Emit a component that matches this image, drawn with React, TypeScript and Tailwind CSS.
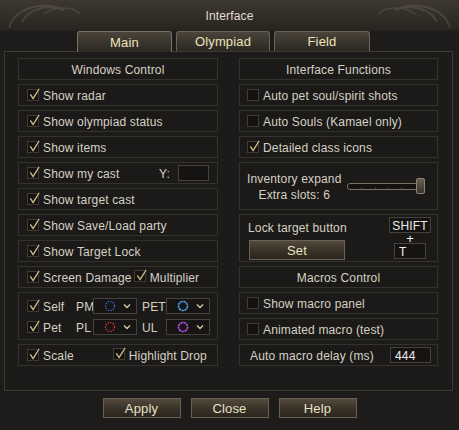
import React from 'react';

const Check: React.FC<{ checked?: boolean }> = ({ checked }) => (
    <span className="relative inline-block w-[12px] h-[12px] border border-[#3f3b35] bg-[#131211] shrink-0">
        {checked && (
            <svg viewBox="0 0 14 14" className="absolute left-[0px] top-[-3px] w-[13px] h-[14px]">
                <path d="M2.5 7.5 L5.5 12 L12 1.5" fill="none" stroke="#1e1a12" strokeWidth="3" />
                <path d="M2.5 7.5 L5.5 12 L12 1.5" fill="none" stroke="#cdbb8a" strokeWidth="1.4" />
            </svg>
        )}
    </span>
);

const Box: React.FC<{ className?: string; children?: React.ReactNode }> = ({ className = '', children }) => (
    <div className={`border border-[#34322e] bg-[#1b1a18] ${className}`}>{children}</div>
);

const Row: React.FC<{ label: string; checked?: boolean; left?: string; children?: React.ReactNode }> = ({
    label,
    checked,
    left = 'pl-[8px]',
    children,
}) => (
    <Box className={`h-[22px] flex items-center gap-[4px] ${left}`}>
        <Check checked={checked} />
        <span className="pt-[2px]">{label}</span>
        {children}
    </Box>
);

const Header: React.FC<{ label: string }> = ({ label }) => (
    <Box className="h-[22px] flex items-center justify-center pt-[1px]">{label}</Box>
);

const Ring: React.FC<{ color: string; dotted?: boolean }> = ({ color, dotted }) => (
    <svg viewBox="0 0 12 12" className="w-[12px] h-[12px]">
        <circle
            cx="6"
            cy="6"
            r="4.5"
            fill="none"
            stroke={color}
            strokeWidth={dotted ? 1.2 : 1.6}
            strokeDasharray={dotted ? '1.4 1.2' : '2.4 0.6'}
        />
    </svg>
);

const Chevron = () => (
    <svg viewBox="0 0 8 6" className="w-[8px] h-[6px]">
        <path d="M1 1.5 L4 4.5 L7 1.5" fill="none" stroke="#d6caa6" strokeWidth="1.4" />
    </svg>
);

const Drop: React.FC<{ color: string; dotted?: boolean }> = ({ color, dotted }) => (
    <div className="w-[44px] h-[16px] border border-[#45423d] bg-[#161513] flex items-center pl-[10px] pr-[5px] justify-between">
        <Ring color={color} dotted={dotted} />
        <Chevron />
    </div>
);

const Btn: React.FC<{ label: string; className?: string }> = ({ label, className = '' }) => (
    <div
        className={`h-[20px] flex items-center justify-center border border-[#6a6354] bg-gradient-to-b from-[#544b3c] via-[#3a3329] to-[#2a251e] text-[#eae2c4] ${className}`}
    >
        {label}
    </div>
);

export default function App() {
    return (
        <div
            className="w-[459px] h-[430px] bg-[#1d1c1a] text-[#d6d1c4] text-[12px] leading-none tracking-[0.15px] relative overflow-hidden"
            style={{ fontFamily: '"Liberation Sans", Arial, sans-serif' }}
        >
            {/* title bar */}
            <div className="h-[31px] bg-gradient-to-b from-[#3d3831] to-[#27241f] flex items-center justify-center relative">
                <span className="text-[#e2ddd2] pt-[1px]">Interface</span>
                <svg viewBox="0 0 80 30" className="absolute left-[4px] top-0 w-[80px] h-[30px] opacity-25">
                    <path d="M5 28 C10 8, 40 0, 60 10 C45 4, 25 8, 18 22" fill="none" stroke="#8a8070" strokeWidth="2" />
                    <path d="M40 14 C50 6, 70 6, 76 14" fill="none" stroke="#8a8070" strokeWidth="1.5" />
                </svg>
                <svg viewBox="0 0 80 30" className="absolute right-[4px] top-0 w-[80px] h-[30px] opacity-25 -scale-x-100">
                    <path d="M5 28 C10 8, 40 0, 60 10 C45 4, 25 8, 18 22" fill="none" stroke="#8a8070" strokeWidth="2" />
                    <path d="M40 14 C50 6, 70 6, 76 14" fill="none" stroke="#8a8070" strokeWidth="1.5" />
                </svg>
            </div>

            {/* tabs */}
            <div className="flex gap-[4px] pl-[77px] h-[20px]">
                <div className="w-[95px] h-[21px] rounded-t-[3px] border border-b-0 border-[#7a7262] bg-gradient-to-b from-[#4a443a] to-[#2c2822] flex items-center justify-center text-[#ece3bd] text-[13px]">
                    Main
                </div>
                <div className="w-[94px] h-[20px] rounded-t-[3px] border border-b-0 border-[#6a6356] bg-gradient-to-b from-[#4a443a] to-[#2c2822] flex items-center justify-center text-[#ece3bd] text-[13px]">
                    Olympiad
                </div>
                <div className="w-[96px] h-[20px] rounded-t-[3px] border border-b-0 border-[#6a6356] bg-gradient-to-b from-[#4a443a] to-[#2c2822] flex items-center justify-center text-[#ece3bd] text-[13px]">
                    Field
                </div>
            </div>

            {/* panel */}
            <div className="mx-[4px] mr-[6px] h-[340px] border border-[#3c3a36] bg-[#1c1b19] flex gap-[21px] pl-[13px] pr-[13px] pt-[6px]">
                <div className="w-[200px] flex flex-col gap-[4px]">
                    <Header label="Windows Control" />
                    <Row label="Show radar" checked />
                    <Row label="Show olympiad status" checked />
                    <Row label="Show items" checked />
                    <Row label="Show my cast" checked>
                        <span className="ml-auto mr-[4px] pt-[2px]">Y:</span>
                        <div className="w-[31px] h-[16px] border border-[#45423d] bg-[#151412] mr-[8px]" />
                    </Row>
                    <Row label="Show target cast" checked />
                    <Row label="Show Save/Load party" checked />
                    <Row label="Show Target Lock" checked />
                    <Row label="Screen Damage" checked>
                        <span className="ml-[-2px]">
                            <Check checked />
                        </span>
                        <span className="pt-[2px]">Multiplier</span>
                    </Row>
                    <Box className="h-[48px] flex flex-col justify-center gap-[5px] pl-[8px]">
                        <div className="flex items-center h-[16px]">
                            <Check checked />
                            <span className="ml-[4px] w-[33px] pt-[2px]">Self</span>
                            <span className="w-[17px] pt-[2px]">PM</span>
                            <Drop color="#3a6cf0" dotted />
                            <span className="ml-[5px] w-[24px] pt-[2px]">PET</span>
                            <Drop color="#4aa2f0" />
                        </div>
                        <div className="flex items-center h-[16px]">
                            <Check checked />
                            <span className="ml-[4px] w-[33px] pt-[2px]">Pet</span>
                            <span className="w-[17px] pt-[2px]">PL</span>
                            <Drop color="#e23a3a" dotted />
                            <span className="ml-[5px] w-[24px] pt-[2px]">UL</span>
                            <Drop color="#b44cf0" />
                        </div>
                    </Box>
                    <Row label="Scale" checked>
                        <span className="ml-[35px]">
                            <Check checked />
                        </span>
                        <span className="pt-[2px]">Highlight Drop</span>
                    </Row>
                </div>

                <div className="w-[199px] flex flex-col gap-[4px]">
                    <Header label="Interface Functions" />
                    <Row label="Auto pet soul/spirit shots" left="pl-[7px]" />
                    <Row label="Auto Souls (Kamael only)" left="pl-[7px]" />
                    <Row label="Detailed class icons" checked left="pl-[7px]" />
                    <Box className="h-[48px] flex items-center pl-[7px]">
                        <div className="flex flex-col items-center gap-[2px] leading-[14px] pt-[2px]">
                            <span>Inventory expand</span>
                            <span>Extra slots: 6</span>
                        </div>
                        <div className="relative ml-[6px] w-[78px] h-[16px] flex items-center">
                            <div className="w-full h-[7px] rounded-[3px] border border-[#7a7363] bg-[#141311]" />
                            {[14, 28, 41, 54].map((x) => (
                                <div key={x} className="absolute top-[10px] w-[1px] h-[2px] bg-[#6a6456]" style={{ left: x }} />
                            ))}
                            <div className="absolute right-0 top-0 w-[9px] h-[16px] rounded-[2px] border border-[#8a8372] bg-gradient-to-b from-[#6a6252] to-[#3a352c]" />
                        </div>
                    </Box>
                    <Box className="h-[48px] flex pl-[7px] pr-[6px]">
                        <div className="flex flex-col pt-[7px]">
                            <span className="pl-[1px]">Lock target button</span>
                            <Btn label="Set" className="mt-[6px] ml-[2px] w-[96px] text-[13px]" />
                        </div>
                        <div className="ml-auto flex flex-col items-center pt-[2px] w-[42px]">
                            <div className="w-[42px] h-[16px] border border-[#45423d] bg-[#151412] flex items-center justify-center text-[#eeeeee] pt-[1px]">
                                SHIFT
                            </div>
                            <span className="h-[10px] leading-[12px] text-[13px] text-[#eeeeee]">+</span>
                            <div className="w-[32px] h-[16px] border border-[#45423d] bg-[#151412] flex items-center pl-[4px] text-[#eeeeee] pt-[1px]">
                                T
                            </div>
                        </div>
                    </Box>
                    <Header label="Macros Control" />
                    <Row label="Show macro panel" left="pl-[7px]" />
                    <Row label="Animated macro (test)" left="pl-[7px]" />
                    <Box className="h-[22px] flex items-center pl-[10px] pr-[6px]">
                        <span className="pt-[2px]">Auto macro delay (ms)</span>
                        <div className="ml-auto w-[41px] h-[16px] border border-[#45423d] bg-[#151412] flex items-center pl-[4px] text-[#eeeeee] pt-[1px]">
                            444
                        </div>
                    </Box>
                </div>
            </div>

            {/* buttons */}
            <div className="flex justify-center gap-[10px] mt-[7px]">
                <Btn label="Apply" className="w-[78px] text-[13px]" />
                <Btn label="Close" className="w-[78px] text-[13px]" />
                <Btn label="Help" className="w-[78px] text-[13px]" />
            </div>
        </div>
    );
}
